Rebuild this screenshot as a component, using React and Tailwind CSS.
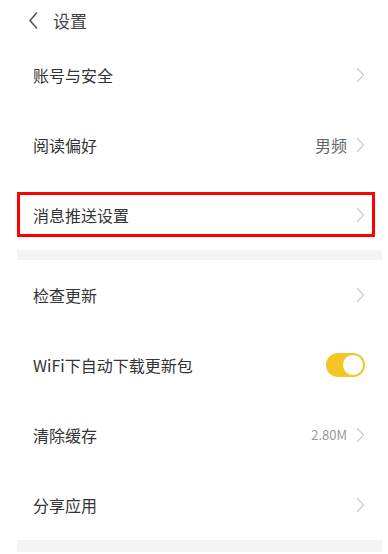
import React from "react";

const Chevron = () => (
  <svg width="9" height="16" viewBox="0 0 9 16" className="shrink-0">
    <path d="M1.5 1.5 L7.5 8 L1.5 14.5" fill="none" stroke="#cfcfcf" strokeWidth="1.3" strokeLinecap="round" strokeLinejoin="round" />
  </svg>
);

const Row = ({ label, right, chevron = true, children }) => (
  <div className="h-[70px] flex items-center pl-[33px] pr-[23px]">
    <span className="text-[16px] text-[#333333] flex-1">{label}</span>
    {right}
    {children}
    {chevron && <Chevron />}
  </div>
);

export default function App() {
  return (
    <div
      className="w-[388px] h-[554px] bg-white overflow-hidden relative"
      style={{ fontFamily: '"Noto Sans CJK SC", "Noto Sans", sans-serif' }}
    >
      <div className="h-[40px] flex items-center pl-[29px]">
        <svg width="9" height="17" viewBox="0 0 9 17">
          <path d="M7.5 1 L1 8.5 L7.5 16" fill="none" stroke="#555555" strokeWidth="1.6" strokeLinecap="round" strokeLinejoin="round" />
        </svg>
        <span className="ml-[15px] text-[17px] text-[#444444] leading-none">设置</span>
      </div>
      <Row label="账号与安全" />
      <Row label="阅读偏好" right={<span className="text-[16px] text-[#666666] mr-[9px]">男频</span>} />
      <div className="relative">
        <Row label="消息推送设置" />
        <div className="absolute left-[17px] top-[12px] w-[358px] h-[45px] border-[3px] border-[#ff0000] pointer-events-none" />
      </div>
      <div className="h-[10px] ml-[17px] mr-[6px] bg-[#f4f4f4]" />
      <Row label="检查更新" />
      <Row label="WiFi下自动下载更新包" chevron={false}>
        <div className="w-[39px] h-[24px] rounded-full bg-[#f2c624] flex items-center justify-end pr-[1px] mr-[0px]">
          <div className="w-[22px] h-[22px] rounded-full bg-white border border-[#f2c624]" />
        </div>
      </Row>
      <Row label="清除缓存" right={<span className="text-[13px] text-[#999999] mr-[9px]">2.80M</span>} />
      <Row label="分享应用" />
      <div className="h-[12px] ml-[17px] mr-[6px] bg-[#f4f4f4]" />
    </div>
  );
}
